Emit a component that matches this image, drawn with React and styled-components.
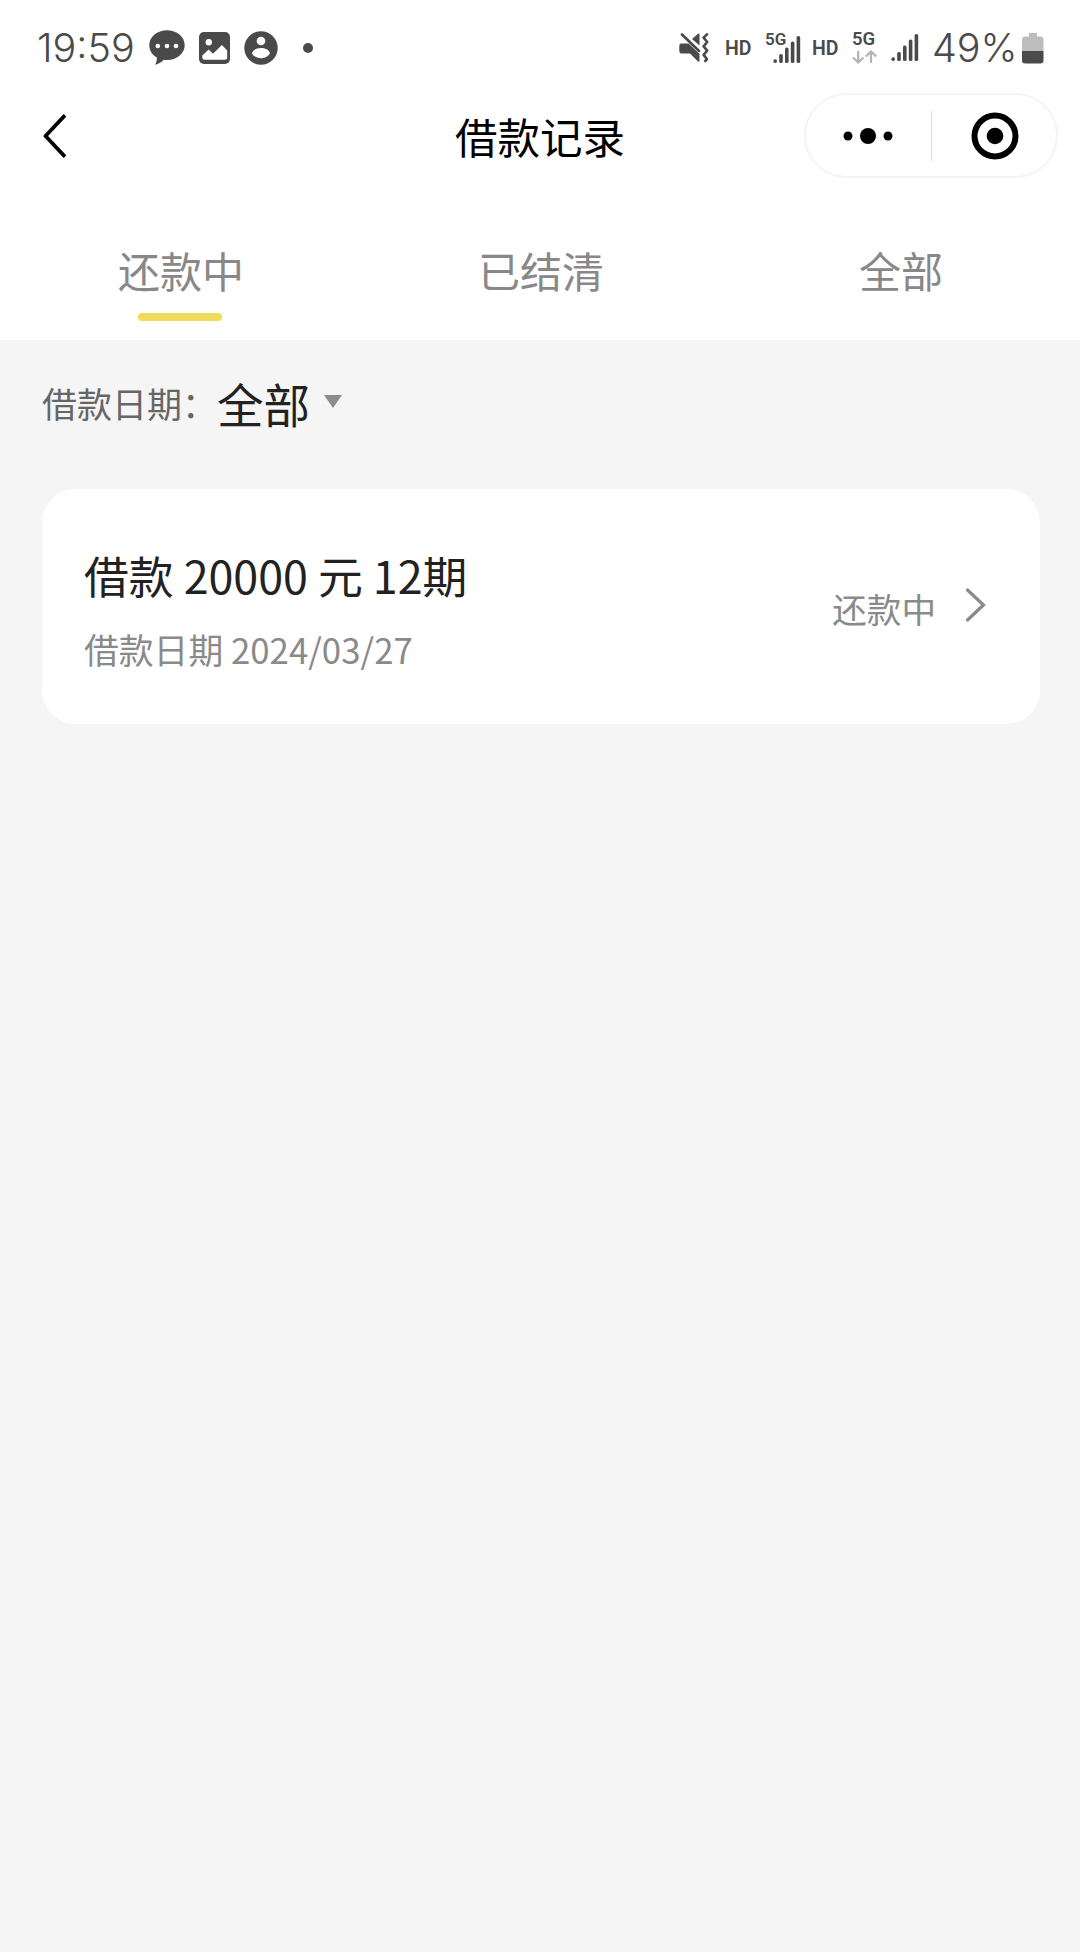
import styled, { createGlobalStyle } from "styled-components";
import { useState } from "react";

const tabs = ["还款中", "已结清", "全部"];

const records = [
  {
    title: "借款 20000 元 12期",
    date: "借款日期 2024/03/27",
    status: "还款中",
  },
];

const SignalBars = () => (
  <svg width="28" height="28" viewBox="0 0 28 28" fill="#4a4a4a">
    <rect x="0.3" y="23.2" width="3.8" height="3.8" rx="1.9" />
    <rect x="6.2" y="18" width="3.6" height="9" rx="1.6" />
    <rect x="12" y="11.5" width="3.6" height="15.5" rx="1.6" />
    <rect x="17.8" y="5.5" width="3.6" height="21.5" rx="1.6" />
    <rect x="23.6" y="0" width="3.6" height="27" rx="1.6" />
  </svg>
);

const App = () => {
  const [active, setActive] = useState(0);

  return (
    <Page>
      <GlobalStyle />
      <StatusBar>
        <StatusLeft>
          <Clock>19:59</Clock>
          <svg width="36" height="36" viewBox="0 0 36 36">
            <path
              d="M18 .3C8.200.3.300 6.800.3 15.200c0 5.300 3 9.800 7.600 12.200.1 2.300-.4 4.800-1.900 7.300 3.700-.8 6.700-2.500 8.700-4.900 1.100.2 2.200.2 3.300.2 9.800 0 17.700-6.500 17.700-14.800S27.800.3 18 .3z"
              fill="#4a4a4a"
            />
            <circle cx="8.800" cy="16" r="2.300" fill="#fff" />
            <circle cx="18" cy="16" r="2.300" fill="#fff" />
            <circle cx="27" cy="16" r="2.300" fill="#fff" />
          </svg>
          <svg width="31" height="32" viewBox="0 0 31 32">
            <rect width="31" height="32" rx="5" fill="#4a4a4a" />
            <circle cx="9.800" cy="10.300" r="3.200" fill="#fff" />
            <path
              d="M3.300 23.500l6.400-6 4.300 4.200 8.900-8.700 5.300 5.400v6.800q0 2.500-2.500 2.500H5.800q-2.500 0-2.500-2.500z"
              fill="#fff"
            />
          </svg>
          <svg width="34" height="34" viewBox="0 0 34 34">
            <circle cx="17" cy="17" r="16.700" fill="#4a4a4a" />
            <circle cx="17" cy="10" r="4.300" fill="#fff" />
            <path
              d="M8 22.500c1-3.700 5-5.400 9-5.400s8 1.700 9 5.400c-2 3.200-5.300 4.800-9 4.800s-7-1.600-9-4.800z"
              fill="#fff"
            />
          </svg>
          <Dot />
        </StatusLeft>
        <StatusRight>
          <svg width="30" height="30" viewBox="0 0 30 30">
            <path
              d="M2 10.500h7.500L20.500 21v6.500q0 2-1.700.7L11 20.500H2.500Q.3 20.500.3 18v-5q0-2.500 1.700-2.500zM13 6l6-5.200q1.500-1 1.500.8v11z"
              fill="#4a4a4a"
            />
            <path d="M3 1.500l17 16.500" stroke="#4a4a4a" strokeWidth="2.600" strokeLinecap="round" />
            <path
              d="M28 1.300l-3.400 3.400 3.600 4.300-3.600 4.300 3.600 4.300-3.600 4.300 3.400 4.300-1.700 1.800"
              fill="none"
              stroke="#4a4a4a"
              strokeWidth="2.600"
              strokeLinejoin="round"
              strokeLinecap="round"
            />
          </svg>
          <Hd $left={16}>HD</Hd>
          <Signal>
            <Network $size={17}>5G</Network>
            <SignalBars />
          </Signal>
          <Hd $left={11}>HD</Hd>
          <DataLink>
            <Network $size={18.5}>5G</Network>
            <svg width="25" height="14" viewBox="0 0 25 14">
              <path
                d="M6.200 1v11.500M1 7.500l5.200 5 5.200-5M19 13V1.500M13.800 6.500l5.200-5 5.200 5"
                fill="none"
                stroke="#b4b4b4"
                strokeWidth="2.200"
              />
            </svg>
          </DataLink>
          <SignalBars />
          <Percent>49%</Percent>
          <svg width="22" height="31" viewBox="0 0 22 31">
            <path
              d="M7 0h8v3.500h3.500q3 0 3 3V18H0V6.500q0-3 3-3h4z"
              fill="#bdbdbd"
            />
            <path d="M0 18h21.500v9.500q0 3-3 3H3q-3 0-3-3z" fill="#4a4a4a" />
          </svg>
        </StatusRight>
      </StatusBar>

      <NavBar>
        <BackButton>
          <svg width="24" height="46" viewBox="0 0 24 46">
            <path
              d="M23 2.200L3.500 23 23 43.800"
              fill="none"
              stroke="#000"
              strokeWidth="3.800"
              strokeLinejoin="round"
            />
          </svg>
        </BackButton>
        <NavTitle>借款记录</NavTitle>
        <Capsule>
          <CapsuleButton>
            <svg width="50" height="18" viewBox="0 0 50 18">
              <circle cx="5" cy="9" r="4.500" />
              <circle cx="25" cy="9" r="8" />
              <circle cx="45" cy="9" r="4.500" />
            </svg>
          </CapsuleButton>
          <CapsuleLine />
          <CapsuleButton $close>
            <svg width="48" height="48" viewBox="0 0 48 48">
              <circle cx="24" cy="24" r="20.500" fill="none" stroke="#000" strokeWidth="6" />
              <circle cx="24" cy="24" r="8.300" />
            </svg>
          </CapsuleButton>
        </Capsule>
      </NavBar>

      <TabBar>
        {tabs.map((tab, i) => (
          <Tab key={i} onClick={() => setActive(i)}>
            <TabText>{tab}</TabText>
            <TabLine $active={active === i} />
          </Tab>
        ))}
      </TabBar>

      <Filter>
        <FilterLabel>借款日期：</FilterLabel>
        <FilterValue>全部</FilterValue>
        <Triangle />
      </Filter>

      <List>
        {records.map(({ title, date, status }, i) => (
          <Card key={i}>
            <Info>
              <CardTitle>{title}</CardTitle>
              <CardDate>{date}</CardDate>
            </Info>
            <Status>{status}</Status>
            <Arrow width="22" height="36" viewBox="0 0 22 36">
              <path
                d="M2.500 3L18.500 18 2.500 33"
                fill="none"
                stroke="#8a8a8a"
                strokeWidth="3.200"
                strokeLinecap="round"
              />
            </Arrow>
          </Card>
        ))}
      </List>
    </Page>
  );
};

const GlobalStyle = createGlobalStyle`
  * {
    box-sizing: border-box;
  }

  body {
    margin: 0;
    background-color: #f5f5f5;
  }

  svg {
    display: block;
    flex-shrink: 0;
  }
`;

const Page = styled.div`
  width: 1080px;
  min-height: 1952px;
  background-color: #f5f5f5;
  font-family: "Noto Sans CJK SC", sans-serif;
`;

const StatusBar = styled.div`
  height: 93px;
  padding: 0 36px 0 37px;
  display: flex;
  justify-content: space-between;
  background-color: white;
  font-family: Roboto, sans-serif;
  color: #4a4a4a;
`;

const StatusLeft = styled.div`
  height: 96px;
  display: flex;
  align-items: center;
`;

const Clock = styled.span`
  width: 112px;
  font-family: Inter, sans-serif;
  font-size: 39.5px;
  font-weight: 330;

  & ~ svg {
    margin-right: 14px;
  }
`;

const Dot = styled.span`
  width: 10px;
  height: 10px;
  margin-left: 11px;
  border-radius: 50%;
  background-color: #4a4a4a;
`;

const StatusRight = styled.div`
  height: 96px;
  display: flex;
  align-items: center;
`;

const Hd = styled.span`
  width: 40px;
  margin-left: ${({ $left }) => $left}px;
  font-size: 19.5px;
  font-weight: 600;
`;

const Signal = styled.div`
  display: flex;
  align-items: flex-end;
  height: 32px;
  width: 36px;

  & > svg {
    margin-left: -13px;
  }
`;

const Network = styled.span`
  font-size: ${({ $size }) => $size}px;
  line-height: 15px;
  font-weight: 600;
  align-self: flex-start;
`;

const DataLink = styled.div`
  display: flex;
  flex-direction: column;
  justify-content: space-between;
  width: 39px;
  height: 32px;
`;

const Percent = styled.span`
  width: 90px;
  margin-left: 13px;
  font-family: Inter, sans-serif;
  font-size: 39.5px;
  font-weight: 330;
`;

const NavBar = styled.div`
  display: grid;
  grid-template-columns: 1fr auto 1fr;
  align-items: center;
  height: 85px;
  padding: 0 22px 0 42px;
  background-color: white;
`;

const BackButton = styled.div`
  width: 60px;
`;

const NavTitle = styled.h1`
  margin: 1px 0 0 -20px;
  font-size: 42.5px;
  line-height: 60px;
  font-weight: 400;
  color: #000;
`;

const Capsule = styled.div`
  justify-self: end;
  display: flex;
  align-items: center;
  width: 254px;
  height: 85px;
  border: 2px solid #f4f4f4;
  border-radius: 43px;
`;

const CapsuleButton = styled.div`
  flex: 1 1 50%;
  display: flex;
  justify-content: center;
  padding-left: ${({ $close }) => ($close ? "3px" : "0")};
`;

const CapsuleLine = styled.div`
  width: 1px;
  height: 50px;
  flex-shrink: 0;
  background-color: #dcdcdc;
`;

const TabBar = styled.div`
  display: flex;
  height: 162px;
  padding-top: 61px;
  background-color: white;
`;

const Tab = styled.div`
  flex: 1;
  display: flex;
  flex-direction: column;
  align-items: center;
`;

const TabText = styled.span`
  padding-left: 2px;
  font-size: 42px;
  line-height: 62px;
  color: #888;
`;

const TabLine = styled.div`
  width: 84px;
  height: 8px;
  margin-top: 12px;
  border-radius: 4px;
  background-color: ${({ $active }) => ($active ? "#efdb57" : "transparent")};
`;

const Filter = styled.div`
  display: flex;
  align-items: center;
  height: 149px;
  padding: 0 42px 24px;
`;

const FilterLabel = styled.span`
  width: 175px;
  font-size: 35px;
  white-space: nowrap;
  color: #666;
`;

const FilterValue = styled.span`
  font-size: 46.5px;
  color: #222;
`;

const Triangle = styled.div`
  margin: -2px 0 0 14px;
  border: 9px solid transparent;
  border-top: 13px solid #8c8c8f;
  border-bottom: 0;
`;

const List = styled.div`
  padding: 0 40px 0 42px;
`;

const Card = styled.div`
  display: flex;
  align-items: center;
  height: 235px;
  padding: 0 53px 0 42px;
  border-radius: 34px;
  background-color: white;
`;

const Info = styled.div`
  flex: 1;
  padding-top: 4px;
`;

const CardTitle = styled.h2`
  margin: 0;
  font-size: 44.8px;
  line-height: 66px;
  font-weight: 400;
  color: #222;
`;

const CardDate = styled.p`
  margin: 15px 0 0;
  font-size: 34.8px;
  line-height: 52px;
  color: #8a8a8a;
`;

const Status = styled.span`
  margin-top: 3px;
  font-size: 34.6px;
  color: #8a8a8a;
`;

const Arrow = styled.svg`
  margin: -4px 0 0 29px;
`;

export default App;
